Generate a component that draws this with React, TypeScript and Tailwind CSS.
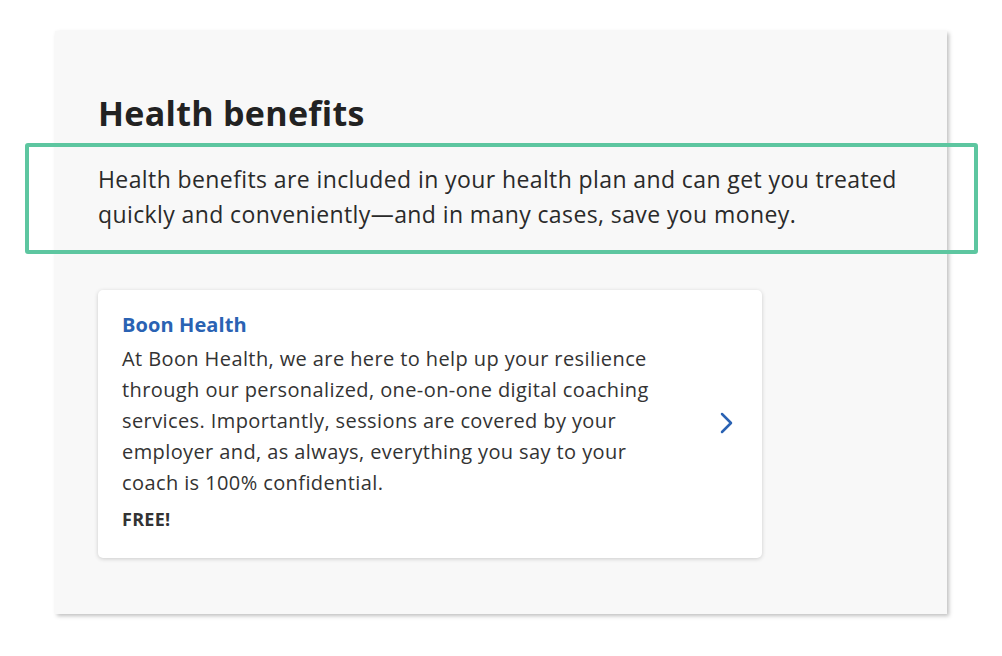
export default function App() {
  return (
    <div className="min-h-[656px] w-full bg-white pt-[31px] pl-[55px] font-['Open_Sans',sans-serif]">
      <section className="w-[892px] h-[583px] bg-[#f8f8f8] shadow-[2px_2px_4px_rgba(0,0,0,0.25)] px-[43px] pt-[58px]">
        <h2 className="text-[34px] leading-[48px] font-bold tracking-[0.3px] text-[#222]">Health benefits</h2>

        {/* Intro copy, outlined in green */}
        <div className="relative mt-[25px]">
          <p className="text-[23px] leading-[35px] tracking-[0.4px] text-[#2a2a2a]">
            Health benefits are included in your health plan and can get you treated quickly and conveniently—and in many cases, save you money.
          </p>
          <div className="absolute -left-[73px] -right-[74px] -top-[19px] -bottom-[22px] border-4 border-[#5dc6a0] rounded-[3px]" />
        </div>

        {/* Benefit card */}
        <div className="mt-[58px] w-[664px] bg-white rounded-[5px] shadow-[0_1px_4px_rgba(0,0,0,0.18)] pl-6 pr-7 pt-[22px] pb-[28px] flex items-center">
          <div className="w-[560px]">
            <h3 className="text-[20px] leading-[26px] font-bold tracking-[0.1px] text-[#2a62b3]">Boon Health</h3>
            <p className="mt-[5px] text-[20px] leading-[31px] tracking-[0.4px] text-[#333]">
              At Boon Health, we are here to help up your resilience through our personalized, one-on-one digital coaching services. Importantly, sessions are covered by your employer and, as always, everything you say to your coach is 100% confidential.
            </p>
            <p className="mt-[10px] text-[18px] leading-[22px] font-bold tracking-[0.3px] text-[#333]">FREE!</p>
          </div>
          <svg className="ml-auto mt-1" width="14" height="22" viewBox="0 0 14 22" fill="none">
            <polyline points="2,2 11,11 2,20" stroke="#2a62b3" strokeWidth="2.5" strokeLinecap="round" strokeLinejoin="round" />
          </svg>
        </div>
      </section>
    </div>
  );
}
